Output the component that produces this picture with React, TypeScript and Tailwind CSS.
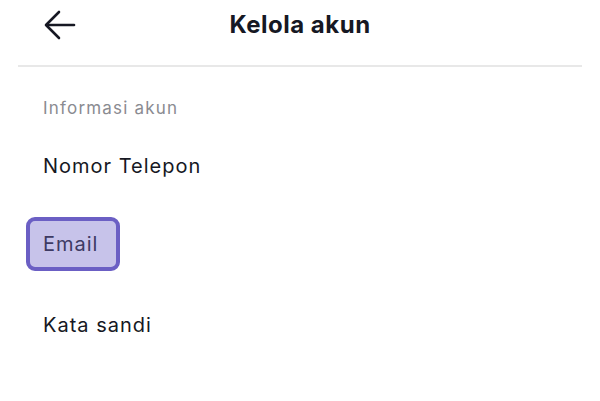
export default function App() {
  return (
    <div
      className="w-[600px] h-[401px] bg-white overflow-hidden"
      style={{ fontFamily: "Inter, 'Noto Sans', sans-serif" }}
    >
      {/* Header */}
      <div className="mx-[18px] h-[67px] border-b-2 border-[#e8e8e8] grid grid-cols-[1fr_auto_1fr] items-center pb-[16px]">
        <div className="pl-[26px] flex items-center">
          <svg width="32" height="30" viewBox="0 0 32 30" fill="none" stroke="#161823" strokeWidth="2.6" strokeLinecap="round" strokeLinejoin="round">
            <path d="M30 15H3" />
            <path d="M15 2L2 15l13 13" />
          </svg>
        </div>
        <h1 className="text-[24px] font-bold text-[#161823] tracking-[0.5px]">Kelola akun</h1>
        <div />
      </div>

      {/* Content */}
      <div className="pl-[43px] flex flex-col items-start">
        <p className="mt-[29px] text-[17px] leading-[24px] text-[#8a8b91] tracking-[1.2px]">Informasi akun</p>
        <p className="mt-[32px] text-[20px] leading-[28px] text-[#161823] tracking-[1px]">Nomor Telepon</p>
        <div className="mt-[37px] -ml-[17px] h-[54px] pl-[13px] pr-[18px] flex items-center rounded-[9px] border-[4px] border-[#6b5fc4] bg-[#c7c3ea]">
          <span className="text-[20px] leading-[28px] text-[#3d3a63] tracking-[1px]">Email</span>
        </div>
        <p className="mt-[40px] text-[20px] leading-[28px] text-[#161823] tracking-[1px]">Kata sandi</p>
      </div>
    </div>
  );
}
